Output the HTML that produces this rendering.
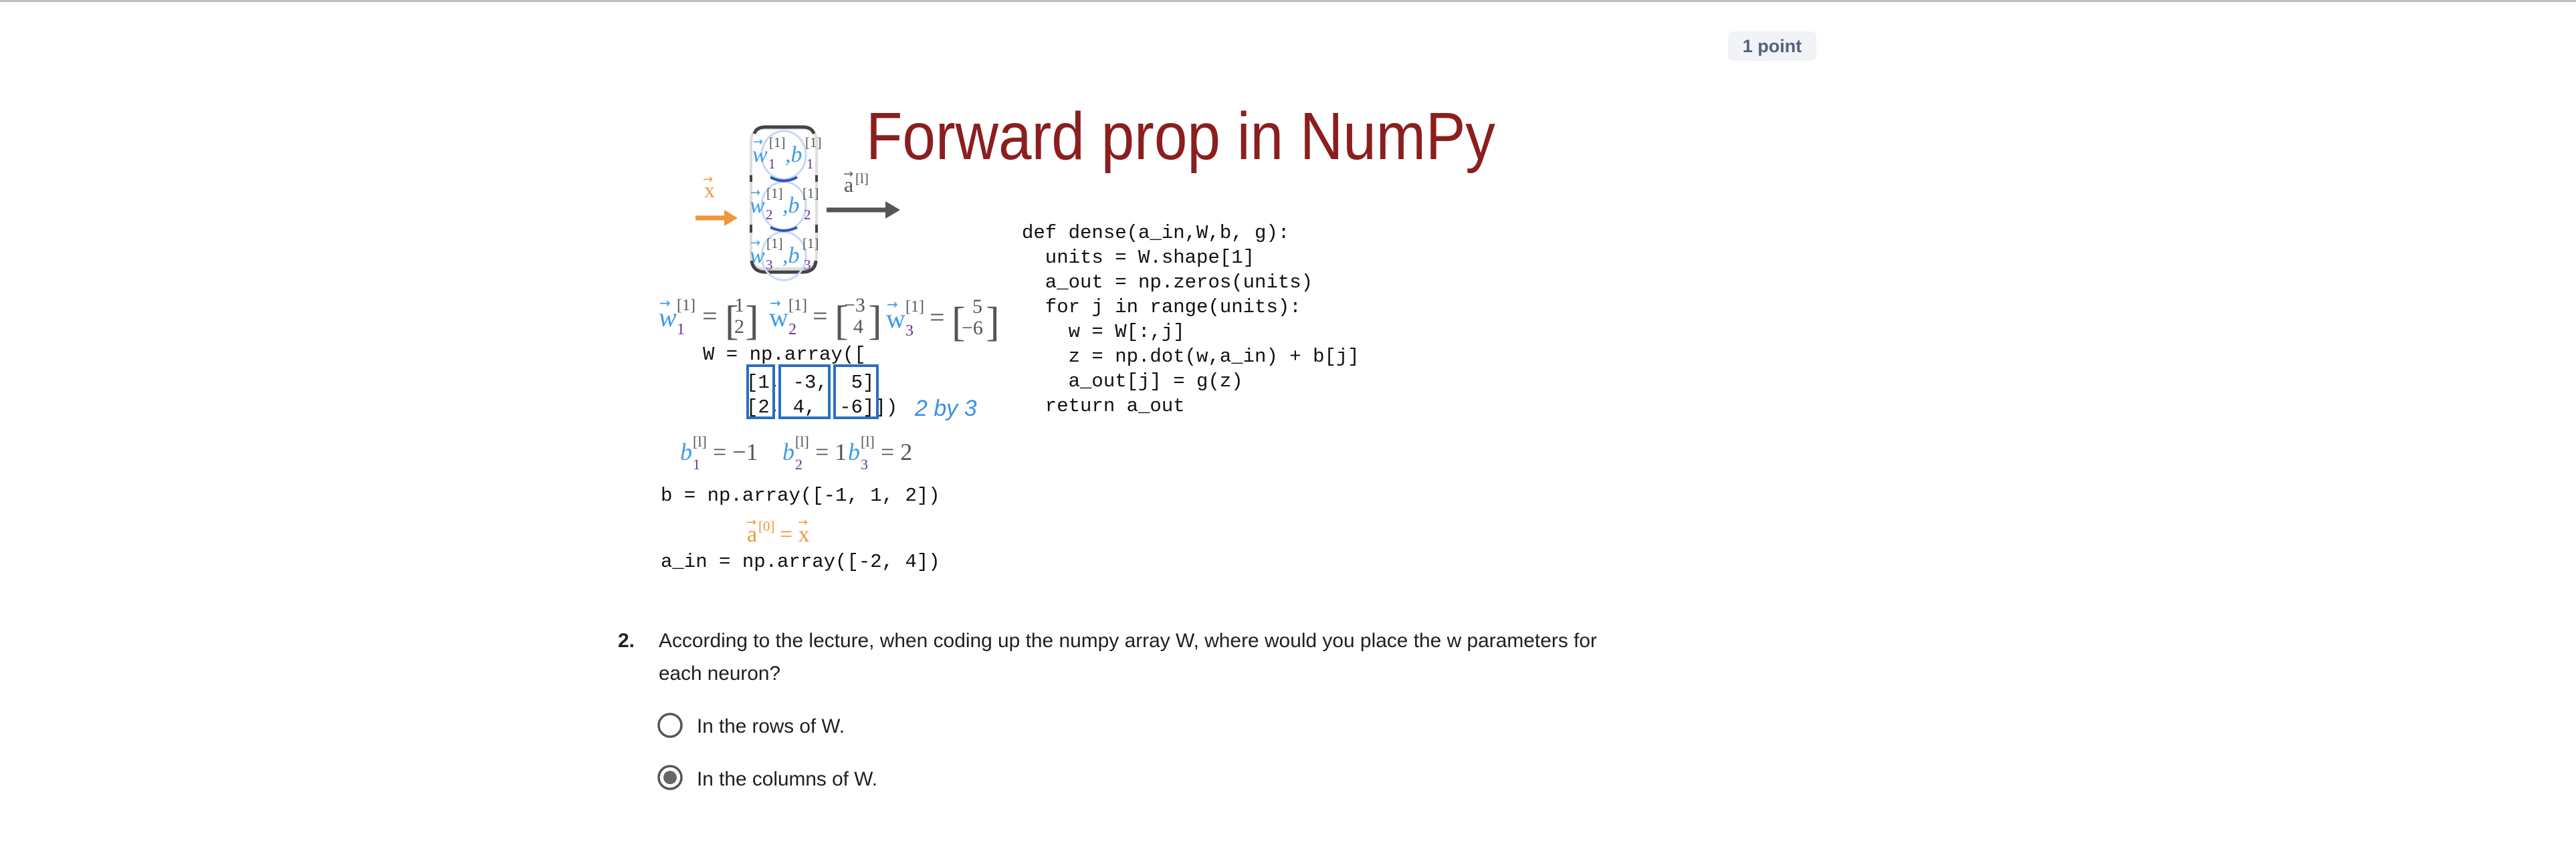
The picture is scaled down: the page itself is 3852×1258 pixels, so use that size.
<!DOCTYPE html>
<html><head><meta charset="utf-8"><style>
html,body{margin:0;padding:0;background:#fff;width:3852px;height:1258px;overflow:hidden}
svg{position:absolute;left:0;top:0}
text{white-space:pre}
.m{font-family:"Liberation Mono",monospace;font-size:29px;fill:#111}
.s{font-family:"Liberation Serif",serif}
.q{font-family:"Liberation Sans",sans-serif;font-size:30px;fill:#1f1f1f}
.ar{font-family:"DejaVu Sans",sans-serif}
</style></head><body>
<svg width="3852" height="1258" viewBox="0 0 3852 1258">
<rect x="0" y="0" width="3852" height="3" fill="#bdbdbd"/>
<rect x="2584" y="47" width="132" height="44" rx="7" fill="#f1f3f7"/>
<text x="2650" y="78" text-anchor="middle" font-family="Liberation Sans,sans-serif" font-weight="bold" font-size="27" fill="#56617a">1 point</text>

<text x="1295" y="238" font-family="Liberation Sans,sans-serif" font-size="100" fill="#8b1e1e" textLength="941" lengthAdjust="spacingAndGlyphs">Forward prop in NumPy</text>

<!-- neuron box -->
<rect x="1123" y="192" width="98" height="210" rx="18" fill="none" stroke="#ddd" stroke-width="4"/>
<path d="M1128 200 Q1131 190 1145 190 L1200 190 Q1214 190 1217 200" fill="none" stroke="#444" stroke-width="5"/>
<path d="M1124 390 Q1126 407 1145 407 L1200 407 Q1219 407 1220 390" fill="none" stroke="#444" stroke-width="5"/>
<g stroke="#444" stroke-width="4"><line x1="1123" y1="262" x2="1123" y2="272"/><line x1="1221" y1="262" x2="1221" y2="272"/><line x1="1123" y1="336" x2="1123" y2="348"/><line x1="1221" y1="336" x2="1221" y2="348"/></g>
<g fill="none" stroke="#c6d8f4" stroke-width="3"><ellipse cx="1172" cy="232" rx="33" ry="36"/><ellipse cx="1172" cy="308" rx="33" ry="36"/><ellipse cx="1172" cy="383" rx="33" ry="36"/></g>
<g fill="none" stroke="#2b57c2" stroke-width="4"><path d="M1152 265 Q1172 276 1192 265"/><path d="M1152 340 Q1172 350 1192 340"/></g>
<g class="s" font-size="34">
<text x="1125" y="242" fill="#3d9be9" font-style="italic">w</text><text x="1126" y="218" class="ar" fill="#3d9be9" font-size="18">→</text><text x="1150" y="220" fill="#555" font-size="21">[1]</text><text x="1149" y="252" fill="#6a2d9c" font-size="21">1</text><text x="1174" y="242" fill="#3d9be9" font-style="italic">,b</text><text x="1204" y="220" fill="#555" font-size="21">[1]</text><text x="1206" y="252" fill="#6a2d9c" font-size="21">1</text>
<text x="1121" y="318" fill="#3d9be9" font-style="italic">w</text><text x="1122" y="294" class="ar" fill="#3d9be9" font-size="18">→</text><text x="1146" y="296" fill="#555" font-size="21">[1]</text><text x="1145" y="328" fill="#6a2d9c" font-size="21">2</text><text x="1170" y="318" fill="#3d9be9" font-style="italic">,b</text><text x="1200" y="296" fill="#555" font-size="21">[1]</text><text x="1202" y="328" fill="#6a2d9c" font-size="21">2</text>
<text x="1121" y="393" fill="#3d9be9" font-style="italic">w</text><text x="1122" y="369" class="ar" fill="#3d9be9" font-size="18">→</text><text x="1146" y="371" fill="#555" font-size="21">[1]</text><text x="1145" y="403" fill="#6a2d9c" font-size="21">3</text><text x="1170" y="393" fill="#3d9be9" font-style="italic">,b</text><text x="1200" y="371" fill="#555" font-size="21">[1]</text><text x="1202" y="403" fill="#6a2d9c" font-size="21">3</text>
</g>
<!-- arrows -->
<path d="M1040 326 L1085 326" stroke="#f0963a" stroke-width="7"/><path d="M1083 314 L1103 326 L1083 338Z" fill="#f0963a"/>
<text x="1053" y="295" class="s" font-size="32" fill="#f0963a">x</text><text x="1051" y="274" class="ar" font-size="18" fill="#f0963a">→</text>
<path d="M1236 314 L1325 314" stroke="#555" stroke-width="7"/><path d="M1324 301 L1346 314 L1324 327Z" fill="#555"/>
<text x="1262" y="287" class="s" font-size="32" fill="#555">a</text><text x="1261" y="266" class="ar" font-size="18" fill="#555">→</text><text x="1279" y="274" class="s" font-size="21" fill="#555">[l]</text>

<!-- w vectors row -->
<g class="s" font-size="40" fill="#555">
<text x="985" y="488" fill="#3d9be9" font-style="italic">w</text><text x="986" y="460" class="ar" font-size="20" fill="#3d9be9">→</text><text x="1012" y="464" font-size="24">[1]</text><text x="1012" y="500" fill="#6a2d9c" font-size="24">1</text>
<text x="1050" y="486">=</text><text x="1084" y="500" font-size="62">[</text><text x="1098" y="466" font-size="30">1</text><text x="1098" y="498" font-size="30">2</text><text x="1114" y="500" font-size="62">]</text>
<text x="1150" y="488" fill="#3d9be9">w</text><text x="1151" y="460" class="ar" font-size="20" fill="#3d9be9">→</text><text x="1179" y="464" font-size="24">[1]</text><text x="1179" y="500" fill="#6a2d9c" font-size="24">2</text>
<text x="1215" y="486">=</text><text x="1248" y="500" font-size="62">[</text><text x="1262" y="466" font-size="30">−3</text><text x="1276" y="498" font-size="30">4</text><text x="1298" y="500" font-size="62">]</text>
<text x="1325" y="490" fill="#3d9be9">w</text><text x="1326" y="462" class="ar" font-size="20" fill="#3d9be9">→</text><text x="1354" y="466" font-size="24">[1]</text><text x="1354" y="502" fill="#6a2d9c" font-size="24">3</text>
<text x="1390" y="488">=</text><text x="1423" y="502" font-size="62">[</text><text x="1454" y="468" font-size="30">5</text><text x="1438" y="500" font-size="30">−6</text><text x="1474" y="502" font-size="62">]</text>
</g>

<!-- left code -->
<text x="1051" y="538" class="m">W = np.array([</text>
<text x="1116" y="580" class="m">[1, -3,  5]</text>
<text x="1116" y="617" class="m">[2, 4,  -6]])</text>
<g fill="none" stroke="#2a6fc0" stroke-width="4"><rect x="1118" y="547" width="39" height="78"/><rect x="1166" y="547" width="74" height="78"/><rect x="1248" y="547" width="64" height="78"/></g>
<text x="1368" y="622" font-family="Liberation Sans,sans-serif" font-style="italic" font-size="34" fill="#3d8fe6">2 by 3</text>

<g class="s" font-size="36" fill="#555">
<text x="1017" y="688" fill="#3d9be9" font-style="italic">b</text><text x="1036" y="668" font-size="22">[l]</text><text x="1036" y="702" fill="#6a2d9c" font-size="22">1</text><text x="1066" y="688">= −1</text>
<text x="1170" y="688" fill="#3d9be9" font-style="italic">b</text><text x="1189" y="668" font-size="22">[l]</text><text x="1189" y="702" fill="#6a2d9c" font-size="22">2</text><text x="1219" y="688">= 1</text>
<text x="1268" y="688" fill="#3d9be9" font-style="italic">b</text><text x="1287" y="668" font-size="22">[l]</text><text x="1287" y="702" fill="#6a2d9c" font-size="22">3</text><text x="1317" y="688">= 2</text>
</g>
<text x="988" y="749" class="m">b = np.array([-1, 1, 2])</text>
<g class="s" font-size="34" fill="#f0963a">
<text x="1117" y="810">a</text><text x="1116" y="787" class="ar" font-size="18">→</text><text x="1134" y="794" font-size="21">[0]</text><text x="1166" y="810">= x</text><text x="1193" y="787" class="ar" font-size="18">→</text>
</g>
<text x="988" y="848" class="m">a_in = np.array([-2, 4])</text>

<!-- right code -->
<text x="1528" y="356" class="m">def dense(a_in,W,b, g):</text>
<text x="1528" y="393" class="m">  units = W.shape[1]</text>
<text x="1528" y="430" class="m">  a_out = np.zeros(units)</text>
<text x="1528" y="467" class="m">  for j in range(units):</text>
<text x="1528" y="504" class="m">    w = W[:,j]</text>
<text x="1528" y="541" class="m">    z = np.dot(w,a_in) + b[j]</text>
<text x="1528" y="578" class="m">    a_out[j] = g(z)</text>
<text x="1528" y="615" class="m">  return a_out</text>

<!-- question -->
<text x="924" y="968" class="q" font-weight="bold">2.</text>
<text x="985" y="968" class="q" textLength="1403" lengthAdjust="spacingAndGlyphs">According to the lecture, when coding up the numpy array W, where would you place the w parameters for</text>
<text x="985" y="1017" class="q" textLength="182" lengthAdjust="spacingAndGlyphs">each neuron?</text>
<circle cx="1002" cy="1085" r="17" fill="none" stroke="#555" stroke-width="3.5"/>
<text x="1042" y="1096" class="q" textLength="221" lengthAdjust="spacingAndGlyphs">In the rows of W.</text>
<circle cx="1002" cy="1163" r="17" fill="none" stroke="#555" stroke-width="3.5"/>
<circle cx="1002" cy="1163" r="10" fill="#666"/>
<text x="1042" y="1175" class="q" textLength="270" lengthAdjust="spacingAndGlyphs">In the columns of W.</text>
</svg>
</body></html>
